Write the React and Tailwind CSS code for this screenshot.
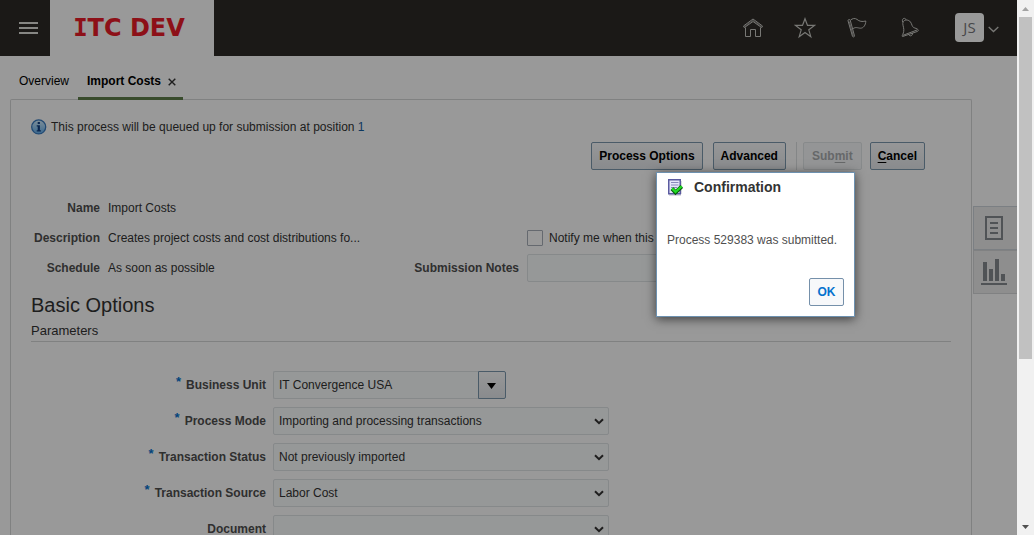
import React from "react";

function HomeIcon() {
  return (
    <svg width="22" height="22" viewBox="0 0 22 22" fill="none" stroke="currentColor" strokeWidth="1">
      <path d="M1.500 9 11 2l9.500 7-.8 1.600L11 4.500l-8.700 6.100z" strokeLinejoin="round" />
      <path d="M3.500 10.500v9h5v-7h5v7h5v-9" />
      <path d="m2.500 9.500 8.500-6.200 8.500 6.200" strokeOpacity=".6" />
    </svg>
  );
}

function StarIcon() {
  return (
    <svg width="22" height="22" viewBox="0 0 22 22" fill="none" stroke="currentColor" strokeWidth="1.2">
      <path d="m11 1.700 2.500 6.700h7l-5.700 4.400 2 6.900L11 15.600l-5.800 4.100 2-6.900L1.500 8.400h7z" />
    </svg>
  );
}

function FlagIcon() {
  return (
    <svg width="22" height="22" viewBox="0 0 22 22" fill="none" stroke="currentColor" strokeWidth="1" strokeLinejoin="round">
      <path d="M2 3.700c-.2-1.200 1.800-1.700 2.200-.5l4.300 15.700c.1 1-1.600 1.400-2 .5z" />
      <path d="M4.400 3.200C6.500 1.300 9 .9 11 2.400c2.300 2 5 2.600 8.800 1.600-.1 4.200-2.400 7.300-5.500 7.200-2.700-.2-4.500-1.600-7.500.6" />
      <path d="m3.300 4.500 4 14.500" strokeOpacity=".7" />
    </svg>
  );
}

function BellIcon() {
  return (
    <svg width="22" height="22" viewBox="0 0 22 22" fill="none" stroke="currentColor" strokeWidth="1" strokeLinejoin="round">
      <path d="M4.200 18.800c.8-2 1.700-3.600 1.600-6.300C5.700 9.500 4 6.800 5.200 4.700c1.500-2.300 5.500-2.200 7.300.3 1.700 2.500 1.300 4.500 3.200 5.500 1.400.8 3.300 1 4.200 2 .7.800.4 1.500-.4 1.900L5 19.400c-.6.200-1-.1-.8-.6z" />
      <path d="M4.700 5.200C3.300 1 7.300.2 8.200 3M10.600 17.400c.9 2.500 4.400 1.500 3.900-1.500M5 18.300l14-5.300" />
    </svg>
  );
}

function InfoIcon() {
  return (
    <svg width="16" height="16" viewBox="0 0 16 16" aria-hidden="true">
      <defs>
        <linearGradient id="info" x1="0" y1="0" x2="0" y2="1">
          <stop offset="0" stopColor="#d5eefc" />
          <stop offset="1" stopColor="#62b0f1" />
        </linearGradient>
      </defs>
      <circle cx="7.700" cy="7.900" r="7" fill="url(#info)" stroke="#387ac0" strokeWidth="1.300" />
      <path d="M6.700 3h2.200v2H6.700zM5.700 6.300h3.200v5h1v1.200H5.700v-1.200h1V7.500h-1z" fill="#123f83" />
    </svg>
  );
}

function ConfirmIcon() {
  return (
    <svg width="16" height="17" viewBox="0 0 16 17" aria-hidden="true">
      <path d="M2 15.500h12v1H2zM13.500 2h1v13h-1z" fill="#b8b8c8" />
      <path d="M1.750.75h11.500v14H1.750z" fill="#e6e6fb" stroke="#5b5ba0" strokeWidth="1.500" />
      <path d="M4 3.500h7.500M4 6h7.500M4 8.500h6M4 11h3" stroke="#8989bd" />
      <path d="m5 9.700 3.500 3.700L14.800 7.500" fill="none" stroke="#075e0b" strokeWidth="4" />
      <path d="m5 9.400 3.500 3.500 6.300-5.700" fill="none" stroke="#20dc24" strokeWidth="2.200" />
    </svg>
  );
}

function Header() {
  return (
    <header className="flex h-14 shrink-0 items-center bg-[#2d2b27] text-[#c9c8c4]">
      <button aria-label="Navigator" className="flex h-14 w-[50px] items-center justify-center pl-1.5">
        <svg width="19" height="12" viewBox="0 0 19 12" fill="#e0dfda">
          <path d="M0 0h19v2H0zM0 5h19v2H0zM0 10h19v2H0z" />
        </svg>
      </button>
      <a href="#home" className="flex h-14 w-[164px] items-center justify-center bg-white pr-1.5 font-['DejaVu_Sans',Verdana,sans-serif] text-2xl font-bold whitespace-pre text-[#ec1c28]">
        <span className="font-['DejaVu_Sans_Mono',monospace]">I</span>TC DEV
      </a>
      <div className="ml-auto flex items-center gap-[30px]">
        <button aria-label="Home"><HomeIcon /></button>
        <button aria-label="Favorites"><StarIcon /></button>
        <button aria-label="Watchlist"><FlagIcon /></button>
        <button aria-label="Notifications"><BellIcon /></button>
      </div>
      <button aria-label="Settings and actions" className="mr-[18px] ml-[35px] flex h-[30px] items-start gap-1">
        <span className="flex size-[29px] items-center justify-center rounded bg-white font-['Open_Sans',sans-serif] text-[15px] text-[#77777a]">JS</span>
        <svg width="11" height="7" viewBox="0 0 11 7" fill="none" stroke="currentColor" strokeWidth="1.300" className="mt-[13px]">
          <path d="m.7 1 4.800 4.500L10.300 1" />
        </svg>
      </button>
    </header>
  );
}

function Tabs() {
  return (
    <nav className="z-10 -mb-px flex h-11 shrink-0 pl-2.5 text-xs text-black">
      <a href="#overview" className="flex items-center px-[9px] pt-1.5 pb-px">Overview</a>
      <div className="flex items-center gap-[7px] border-b-3 border-[#607f4c] pt-2 pr-[7px] pl-[9px]">
        <a href="#import" className="font-bold">Import Costs</a>
        <button aria-label="Close tab" className="pt-0.5">
          <svg width="8" height="8" viewBox="0 0 8 8" stroke="#333" strokeWidth="1.400">
            <path d="m.7.7 6.600 6.600M7.300.7.7 7.300" />
          </svg>
        </button>
      </div>
    </nav>
  );
}

const buttonStyle =
  "h-7 rounded-[2px] border border-[#7c98ae] bg-linear-to-b from-[#fbfcfd] to-[#e5e8ec] px-[7px] text-xs font-bold text-black";

function Actions() {
  return (
    <div className="mr-[26px] flex h-7 items-center justify-end">
      <button className={`px-2 ${buttonStyle}`}>Process Options</button>
      <button className={`ml-2.5 px-2 ${buttonStyle}`}>Advanced</button>
      <span className="ml-2.5 h-7 w-px bg-[#dcdfe1]" />
      <button disabled className="ml-1.5 h-7 rounded-[2px] border border-[#e2e6e8] bg-[#f7f9fa] px-2 text-xs font-bold text-[#aaadb0]">
        Sub<u className="underline-offset-2">m</u>it
      </button>
      <button className={`ml-2 ${buttonStyle}`}>
        <u className="underline-offset-2">C</u>ancel
      </button>
    </div>
  );
}

function Summary() {
  return (
    <div className="mt-[23px] flex text-xs text-[#333]">
      <dl className="grid w-[378px] grid-cols-[69px_1fr] gap-x-2 leading-[30px]">
        <dt className="text-right font-bold text-[#4f4f4f]">Name</dt>
        <dd>Import Costs</dd>
        <dt className="text-right font-bold text-[#4f4f4f]">Description</dt>
        <dd>Creates project costs and cost distributions fo...</dd>
        <dt className="text-right font-bold text-[#4f4f4f]">Schedule</dt>
        <dd>As soon as possible</dd>
      </dl>
      <div className="min-w-0 flex-1 pt-[30px]">
        <label className="flex h-[30px] items-center gap-1.5 pl-[118px]">
          <input type="checkbox" className="size-4 appearance-none rounded-[1px] border border-[#a9b0ba] bg-white" />
          Notify me when this
        </label>
        <div className="flex h-[30px] items-center gap-2">
          <label htmlFor="notes" className="w-[110px] text-right font-bold text-[#4f4f4f]">Submission Notes</label>
          <input id="notes" className="h-7 w-[240px] rounded-[2px] border border-[#dfe4e7] bg-[#fbfdfd] px-1.5" />
        </div>
      </div>
    </div>
  );
}

function FieldLabel({ id, required, children }) {
  return (
    <label htmlFor={id} className="flex w-[235px] justify-end gap-[5px] font-bold text-[#4f4f4f]">
      {required && <span className="-mt-1 text-[13px] text-[#0572ce]">*</span>}
      {children}
    </label>
  );
}

function SelectField({ id, label, value, required }) {
  return (
    <div className="flex items-center gap-[7px]">
      <FieldLabel id={id} required={required}>{label}</FieldLabel>
      <div className="relative w-[336px]">
        <select id={id} className="h-7 w-full appearance-none rounded-[2px] border border-[#dfe4e7] bg-[#fbfdfd] px-[5px] text-[#333]">
          <option>{value}</option>
        </select>
        <svg width="10" height="7" viewBox="0 0 10 7" fill="none" stroke="#333" strokeWidth="2" className="pointer-events-none absolute top-[11px] right-[5px]">
          <path d="m1 1.200 4 4 4-4" />
        </svg>
      </div>
    </div>
  );
}

function Parameters() {
  return (
    <form className="mt-[29px] flex flex-col gap-2 text-xs">
      <div className="flex items-center gap-[7px]">
        <FieldLabel id="unit" required>Business Unit</FieldLabel>
        <div className="flex">
          <input id="unit" defaultValue="IT Convergence USA" className="h-7 w-[205px] rounded-l-[2px] border border-r-0 border-[#dfe4e7] bg-[#fbfdfd] px-[5px] text-[#333]" />
          <button type="button" aria-label="Search business unit" className="flex h-7 w-7 items-center justify-center rounded-r-[2px] border border-[#7c98ae] bg-linear-to-b from-[#fbfcfd] to-[#e5e8ec] pt-px pr-0.5">
            <svg width="9" height="6" viewBox="0 0 9 6"><path d="M0 0h9L4.500 6z" /></svg>
          </button>
        </div>
      </div>
      <SelectField id="mode" label="Process Mode" value="Importing and processing transactions" required />
      <SelectField id="status" label="Transaction Status" value="Not previously imported" required />
      <SelectField id="source" label="Transaction Source" value="Labor Cost" required />
      <SelectField id="document" label="Document" value="" />
    </form>
  );
}

function SidePanel() {
  return (
    <aside className="w-[45px] shrink-0 pt-[107px] pl-px text-[#858b90]">
      <button aria-label="Reports" className="flex h-11 w-full items-center justify-center border border-r-0 border-[#cdd4da] bg-[#ededed] pr-[3px]">
        <svg width="18" height="24" viewBox="0 0 18 24" fill="none" stroke="currentColor" strokeWidth="2">
          <path d="M1 1h16v22H1zM5 7h8M5 12h8M5 17h8" />
        </svg>
      </button>
      <button aria-label="Analytics" className="flex h-11 w-full items-center justify-center border border-r-0 border-[#d5d7d9] bg-[#ededed] pr-[3px]">
        <svg width="26" height="26" viewBox="0 0 26 26" fill="currentColor">
          <path d="M2 3h4v19H2zM8 10h4v12H8zM14 0h4v22h-4zM20 15h4v7h-4zM0 24h26v2H0z" />
        </svg>
      </button>
    </aside>
  );
}

function Scrollbar() {
  return (
    <div className="flex w-[17px] shrink-0 flex-col items-center bg-[#f1f1f1]" aria-hidden="true">
      <div className="flex h-[17px] shrink-0 items-center">
        <svg width="7" height="4" viewBox="0 0 7 4" fill="#a3a3a3"><path d="M0 4h7L3.500 0z" /></svg>
      </div>
      <div className="h-[64%] w-[13px] bg-[#c1c1c1]" />
      <div className="mt-auto flex h-[17px] shrink-0 items-center">
        <svg width="7" height="4" viewBox="0 0 7 4" fill="#505050"><path d="M0 0h7L3.500 4z" /></svg>
      </div>
    </div>
  );
}

function ConfirmationDialog() {
  return (
    <section role="dialog" aria-labelledby="confirm-title" className="absolute top-[172px] left-[656px] z-30 flex w-[199px] flex-col border border-[#6d91b0] bg-white px-2.5 pt-[3px] pb-2.5 shadow-[0_2px_10px_rgba(0,0,0,0.6)]">
      <div className="flex h-[22px] items-center gap-[11px]">
        <ConfirmIcon />
        <h2 id="confirm-title" className="text-sm font-bold text-[#333]">Confirmation</h2>
      </div>
      <p className="mt-[33px] text-xs leading-[18px] whitespace-nowrap text-[#4f4f4f]">Process 529383 was submitted.</p>
      <button className="mt-[29px] h-7 w-[35px] self-end rounded-[2px] border border-[#7590aa] bg-[#f7f8fa] text-xs font-bold text-[#0572ce]">OK</button>
    </section>
  );
}

export default function App() {
  return (
    <div className="flex h-screen overflow-hidden bg-white font-['Liberation_Sans',Arial,sans-serif]">
      <div className="relative flex min-w-0 flex-1 flex-col overflow-hidden">
        <Header />
        <Tabs />
        <div className="flex flex-1 pl-2.5">
          <main className="min-w-0 flex-1 rounded-t-[2px] border border-b-0 border-[#d6d7d8] px-5 pt-[18px]">
            <div className="flex h-[18px] items-center gap-1 text-xs text-[#333]">
              <InfoIcon />
              <p>This process will be queued up for submission at position <span className="text-[#145c9e]">1</span></p>
            </div>
            <div className="mt-1.5"><Actions /></div>
            <Summary />
            <h1 className="mt-2 text-xl leading-7 text-[#333]">Basic Options</h1>
            <h2 className="border-b border-[#d6d7d8] pt-0.5 text-[13px] leading-[20px] text-[#333]">Parameters</h2>
            <Parameters />
          </main>
          <SidePanel />
        </div>
        <div className="absolute inset-0 z-20 bg-black/40" />
        <ConfirmationDialog />
      </div>
      <Scrollbar />
    </div>
  );
}
